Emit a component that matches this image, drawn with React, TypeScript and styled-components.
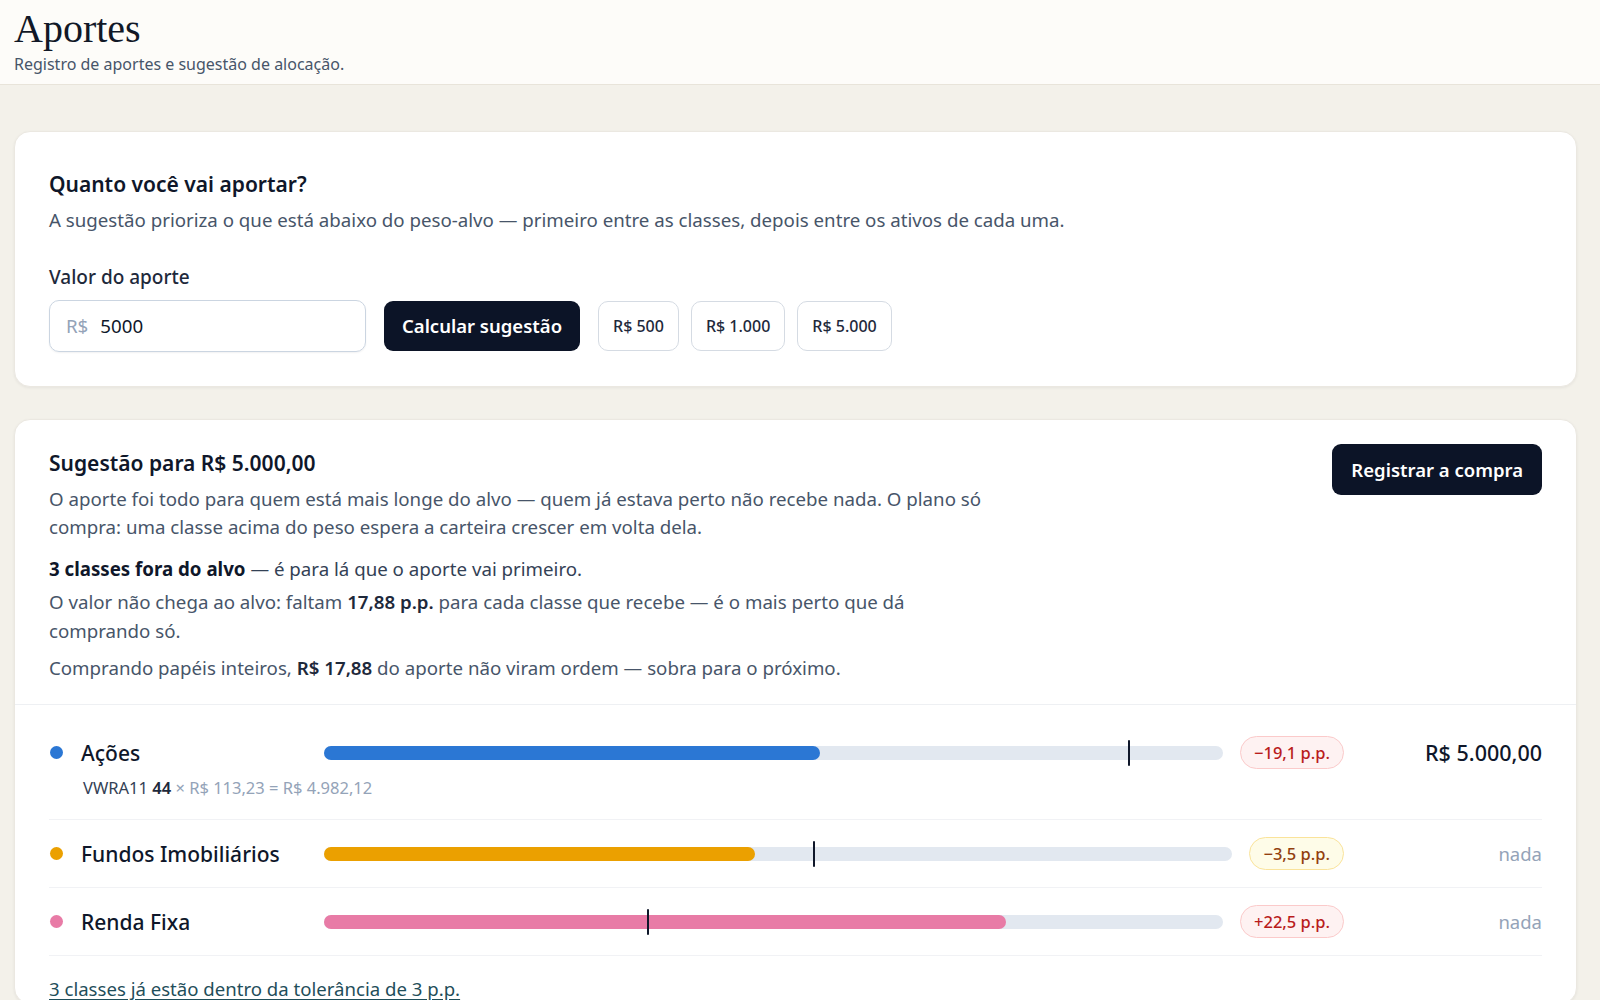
import styled, { createGlobalStyle } from 'styled-components'

const GlobalStyle = createGlobalStyle`
  html, body {
    margin: 0;
    padding: 0;
    background: #f3f1ea;
    font-family: 'Noto Sans', 'Open Sans', sans-serif;
    color: #0f172a;
  }
  * { box-sizing: border-box; }
`

const Header = styled.header`
  background: #fdfcf9;
  border-bottom: 1px solid #e8e4da;
  padding: 7px 14px 9px;
`

const PageTitle = styled.h1`
  margin: 0;
  font-family: 'Liberation Serif', 'DejaVu Serif', serif;
  font-weight: 400;
  font-size: 40px;
  line-height: 44px;
  color: #111827;
`

const PageSubtitle = styled.div`
  font-size: 16px;
  line-height: 22px;
  color: #475569;
  margin-top: 2px;
`

const Main = styled.main`
  padding: 46px 23px 0 14px;
  display: flex;
  flex-direction: column;
  gap: 32px;
`

const Card = styled.section`
  background: #fff;
  border-radius: 16px;
  border: 1px solid #ebe8e1;
  box-shadow: 0 1px 3px rgba(15, 23, 42, 0.06);
  overflow: hidden;
`

const CardBody = styled.div`
  padding: 37px 34px 34px;
`

const CardTitle = styled.h2`
  margin: 0;
  font-size: 21px;
  font-weight: 600;
  line-height: 30px;
  color: #0f172a;
`

const Text = styled.p<{ $gap?: number; $max?: number }>`
  margin: ${(p) => p.$gap ?? 8}px 0 0;
  font-size: 18.7px;
  line-height: 28.6px;
  color: #475569;
  max-width: ${(p) => (p.$max ? `${p.$max}px` : 'none')};
  b { color: #1e293b; font-weight: 600; }
`

const StrongText = styled(Text)`
  color: #334155;
  b { color: #0f172a; font-weight: 700; }
`

const Label = styled.div`
  margin-top: 29px;
  font-size: 19px;
  line-height: 26px;
  font-weight: 500;
  color: #1e293b;
`

const InputRow = styled.div`
  margin-top: 10px;
  display: flex;
  align-items: center;
  gap: 18px;
`

const InputBox = styled.div`
  flex-shrink: 0;
  width: 317px;
  height: 52px;
  border: 1px solid #cbd5e1;
  border-radius: 10px;
  display: flex;
  align-items: center;
  padding: 0 16px;
  gap: 12px;
  font-size: 18.7px;
  box-shadow: 0 1px 2px rgba(15, 23, 42, 0.06);
`

const Prefix = styled.span`
  color: #94a3b8;
`

const Value = styled.span`
  color: #0f172a;
`

const PrimaryButton = styled.button`
  flex-shrink: 0;
  height: 50px;
  padding: 0 18px;
  border: none;
  border-radius: 9px;
  background: #0c1427;
  color: #fff;
  font-family: inherit;
  font-size: 18.5px;
  font-weight: 600;
`

const ChipGroup = styled.div`
  display: flex;
  gap: 12px;
`

const Chip = styled.button`
  height: 50px;
  padding: 0 14px;
  border: 1px solid #d5dbe3;
  border-radius: 10px;
  background: #fff;
  color: #1e293b;
  font-family: inherit;
  font-size: 16px;
  font-weight: 500;
`

const SummaryTop = styled.div`
  display: flex;
  justify-content: space-between;
  align-items: flex-start;
  padding: 28px 34px 22px;
  border-bottom: 1px solid #eef0f3;
`

const SummaryText = styled.div`
  max-width: 960px;
`

const RegisterButton = styled(PrimaryButton)`
  margin-top: -4px;
  height: 51px;
  padding: 0 19px;
`

const List = styled.div`
  padding: 14px 34px 0;
`

const Row = styled.div`
  padding: 17px 0;
  border-bottom: 1px solid #f1f2f5;
`

const RowMain = styled.div`
  display: grid;
  grid-template-columns: 258px 1fr auto 181px;
  align-items: center;
  column-gap: 17px;
`

const ClassName = styled.div`
  display: flex;
  align-items: center;
  gap: 18px;
  font-size: 21px;
  font-weight: 500;
  color: #0f172a;
  padding-left: 1px;
`

const Dot = styled.span<{ $color: string }>`
  flex-shrink: 0;
  width: 13px;
  height: 13px;
  border-radius: 50%;
  background: ${(p) => p.$color};
`

const Track = styled.div`
  position: relative;
  height: 14px;
  border-radius: 7px;
  background: #e2e8f0;
`

const Fill = styled.div<{ $color: string }>`
  height: 100%;
  border-radius: 7px;
  background: ${(p) => p.$color};
`

const Target = styled.div`
  position: absolute;
  top: -6px;
  width: 2px;
  height: 26px;
  background: #0f172a;
  border-radius: 1px;
`

const Badge = styled.span<{ $tone: 'red' | 'amber' }>`
  display: inline-flex;
  align-items: center;
  height: 33px;
  padding: 0 13px;
  border-radius: 17px;
  font-size: 16.5px;
  font-weight: 500;
  background: ${(p) => (p.$tone === 'red' ? '#fef2f2' : '#fefce8')};
  border: 1px solid ${(p) => (p.$tone === 'red' ? '#fbcaca' : '#fae39a')};
  color: ${(p) => (p.$tone === 'red' ? '#b91c1c' : '#92400e')};
`

const Amount = styled.div<{ $muted?: boolean }>`
  text-align: right;
  font-size: ${(p) => (p.$muted ? '18.5px' : '21.5px')};
  font-weight: ${(p) => (p.$muted ? 400 : 500)};
  color: ${(p) => (p.$muted ? '#94a3b8' : '#0f172a')};
`

const Detail = styled.div`
  margin: 8px 0 3px 34px;
  font-size: 16.5px;
  line-height: 22px;
  color: #94a3b8;
  b { color: #1e293b; font-weight: 600; }
  span { color: #334155; }
`

const FooterLink = styled.a`
  display: inline-block;
  margin-top: 19px;
  font-size: 18.6px;
  line-height: 28px;
  color: #1f4e5a;
  text-decoration: underline;
  text-underline-offset: 3px;
`

type Item = {
  name: string
  color: string
  fill: number
  target: number
  badge: string
  tone: 'red' | 'amber'
  amount: string
  detail?: boolean
}

const items: Item[] = [
  { name: 'Ações', color: '#2b77d4', fill: 55.2, target: 89.4, badge: '−19,1 p.p.', tone: 'red', amount: 'R$ 5.000,00', detail: true },
  { name: 'Fundos Imobiliários', color: '#eba000', fill: 47.4, target: 53.8, badge: '−3,5 p.p.', tone: 'amber', amount: 'nada' },
  { name: 'Renda Fixa', color: '#e87ba6', fill: 75.9, target: 35.9, badge: '+22,5 p.p.', tone: 'red', amount: 'nada' },
]

export default function App() {
  return (
    <>
      <GlobalStyle />
      <Header>
        <PageTitle>Aportes</PageTitle>
        <PageSubtitle>Registro de aportes e sugestão de alocação.</PageSubtitle>
      </Header>
      <Main>
        <Card>
          <CardBody>
            <CardTitle>Quanto você vai aportar?</CardTitle>
            <Text $gap={7}>
              A sugestão prioriza o que está abaixo do peso-alvo — primeiro entre as classes, depois entre os ativos de cada uma.
            </Text>
            <Label>Valor do aporte</Label>
            <InputRow>
              <InputBox>
                <Prefix>R$</Prefix>
                <Value>5000</Value>
              </InputBox>
              <PrimaryButton>Calcular sugestão</PrimaryButton>
              <ChipGroup>
                <Chip>R$ 500</Chip>
                <Chip>R$ 1.000</Chip>
                <Chip>R$ 5.000</Chip>
              </ChipGroup>
            </InputRow>
          </CardBody>
        </Card>

        <Card>
          <SummaryTop>
            <SummaryText>
              <CardTitle>Sugestão para R$ 5.000,00</CardTitle>
              <Text $gap={7} $max={945}>
                O aporte foi todo para quem está mais longe do alvo — quem já estava perto não recebe nada. O plano só compra: uma classe acima do peso espera a carteira crescer em volta dela.
              </Text>
              <StrongText $gap={13}>
                <b>3 classes fora do alvo</b> — é para lá que o aporte vai primeiro.
              </StrongText>
              <Text $gap={5} $max={870}>
                O valor não chega ao alvo: faltam <b>17,88 p.p.</b> para cada classe que recebe — é o mais perto que dá comprando só.
              </Text>
              <Text $gap={8}>
                Comprando papéis inteiros, <b>R$ 17,88</b> do aporte não viram ordem — sobra para o próximo.
              </Text>
            </SummaryText>
            <RegisterButton>Registrar a compra</RegisterButton>
          </SummaryTop>

          <List>
            {items.map((it) => (
              <Row key={it.name}>
                <RowMain>
                  <ClassName>
                    <Dot $color={it.color} />
                    {it.name}
                  </ClassName>
                  <Track>
                    <Fill $color={it.color} style={{ width: `${it.fill}%` }} />
                    <Target style={{ left: `${it.target}%` }} />
                  </Track>
                  <Badge $tone={it.tone}>{it.badge}</Badge>
                  <Amount $muted={it.amount === 'nada'}>{it.amount}</Amount>
                </RowMain>
                {it.detail && (
                  <Detail>
                    <span>VWRA11</span> <b>44</b> × R$ 113,23 = R$ 4.982,12
                  </Detail>
                )}
              </Row>
            ))}
            <FooterLink href="#">3 classes já estão dentro da tolerância de 3 p.p.</FooterLink>
          </List>
        </Card>
      </Main>
    </>
  )
}
